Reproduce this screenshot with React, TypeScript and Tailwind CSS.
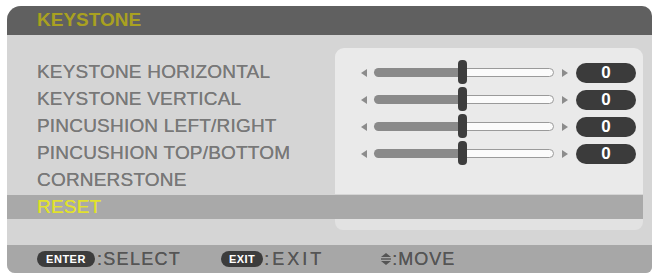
import React from "react";

const FONT = { fontFamily: '"Liberation Sans", Arial, sans-serif' };

function SliderRow() {
  return (
    <div className="flex h-full items-center pl-[26px]">
      <div className="h-0 w-0 border-y-[4px] border-r-[6px] border-y-transparent border-r-[#8c8c8c]" />
      <div className="relative ml-[7px] flex h-[9px] w-[180px] items-center">
        <div className="h-[9px] w-[88px] rounded-l-full bg-[#8a8a8a]" />
        <div className="h-[9px] flex-1 rounded-r-full border border-[#9a9a9a] bg-[#fbfbfb]" />
        <div className="absolute left-[84px] top-[-8px] h-[24px] w-[9px] rounded-[4px] bg-[#3d3d3d]" />
      </div>
      <div className="ml-[8px] h-0 w-0 border-y-[4px] border-l-[6px] border-y-transparent border-l-[#8c8c8c]" />
      <div className="ml-[8px] flex h-[20px] w-[60px] items-center justify-center rounded-full bg-[#3b3b3b] text-[17px] font-bold text-white">
        0
      </div>
    </div>
  );
}

const rows = [
  "KEYSTONE HORIZONTAL",
  "KEYSTONE VERTICAL",
  "PINCUSHION LEFT/RIGHT",
  "PINCUSHION TOP/BOTTOM",
  "CORNERSTONE",
];

export default function App() {
  return (
    <div className="h-[279px] w-[660px] bg-white pl-[7px] pt-[6px]" style={FONT}>
      <div className="flex h-[267px] w-[645px] flex-col overflow-hidden rounded-tl-[14px] rounded-tr-[10px] rounded-bl-[8px] rounded-br-[6px] bg-[#d5d5d5]">
        <div className="flex h-[29px] items-center bg-[#606060] pl-[30px] text-[19px] font-bold text-[#a9a120]">
          KEYSTONE
        </div>
        <div className="h-[13px]" />
        <div className="flex h-[11px]">
          <div className="w-[328px]" />
          <div className="w-[308px] rounded-t-[9px] bg-[#eaeaea]" />
        </div>
        {rows.map((r, i) => (
          <div key={r} className="flex h-[27px]">
            <div className="flex w-[328px] items-center pl-[30px] text-[19px] tracking-[0.2px] text-[#787878] [text-shadow:0_0_0.6px_#787878]">
              {r}
            </div>
            <div className="w-[308px] bg-[#eaeaea]">{i < 4 ? <SliderRow /> : null}</div>
          </div>
        ))}
        <div className="mt-[1px] flex h-[24px] w-[636px] items-center bg-[#a9a9a9] pl-[30px] text-[19px] tracking-[0.2px] text-[#e2e22c] [text-shadow:0_0_0.6px_#e2e22c]">
          RESET
        </div>
        <div className="flex h-[11px]">
          <div className="w-[328px]" />
          <div className="w-[308px] rounded-b-[8px] bg-[#e2e2e2]" />
        </div>
        <div className="h-[15px]" />
        <div className="flex h-[28px] items-center bg-[#a7a7a7] pl-[30px] text-[18px] text-[#555555] [text-shadow:0_0_0.5px_#555555]">
          <div className="flex h-[16px] w-[58px] items-center justify-center rounded-full bg-[#3c3c3c] text-[11px] font-bold tracking-[0.5px] text-white">
            ENTER
          </div>
          <span className="ml-[2px] tracking-[1.3px]">:SELECT</span>
          <div className="ml-[40px] flex h-[16px] w-[42px] items-center justify-center rounded-full bg-[#3c3c3c] text-[11px] font-bold tracking-[0.5px] text-white">
            EXIT
          </div>
          <span className="ml-[1px] tracking-[3px]">:EXIT</span>
          <svg className="ml-[56px]" width="12" height="14" viewBox="0 0 12 14">
            <polygon points="6,1 11,5 1,5" fill="#555555" />
            <rect x="1" y="6.3" width="10" height="1.4" fill="#555555" />
            <polygon points="1,9 11,9 6,13" fill="#555555" />
          </svg>
          <span className="tracking-[1px]">:MOVE</span>
        </div>
      </div>
    </div>
  );
}
